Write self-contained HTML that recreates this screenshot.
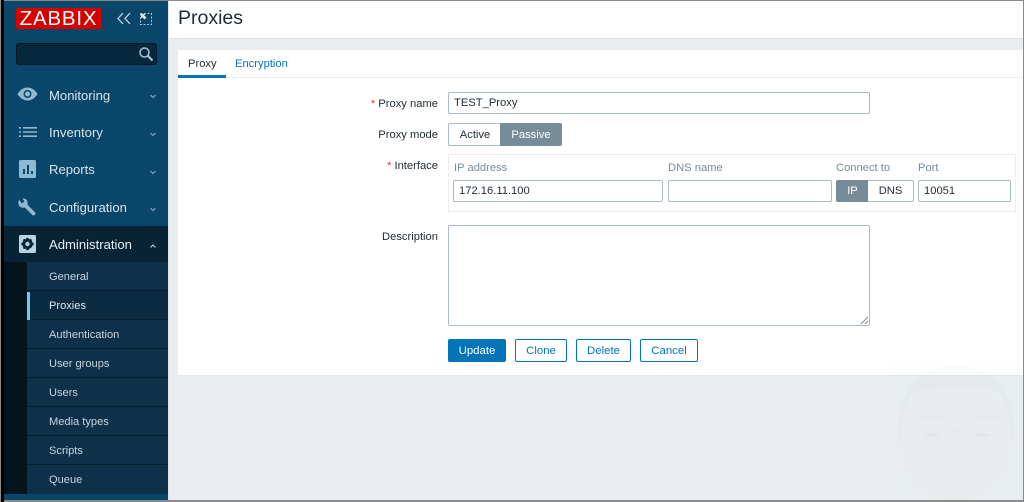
<!DOCTYPE html>
<html><head><meta charset="utf-8"><style>
*{box-sizing:border-box}
html,body{margin:0;padding:0}
html{background:#e9edf0}
body{width:1024px;height:502px;position:relative;overflow:hidden;background:#e9edf0;font-family:"Liberation Sans",sans-serif;font-size:11.2px;color:#1f2c33;filter:blur(.35px)}
.a{position:absolute}
.t{position:absolute;white-space:nowrap;line-height:14px}
.nav{position:absolute;left:49px;font-size:13.1px;color:#d7e4ec;white-space:nowrap;line-height:16px}
.sub{position:absolute;left:27px;width:141px;height:29px;background:#0e3049;border-bottom:1px solid #07202f}
.sub span{position:absolute;left:22px;top:8px;color:#c6d5de;font-size:11.1px;line-height:14px;white-space:nowrap}
.inp{position:absolute;border:1px solid #acbbc2;border-radius:2px;background:#fff;height:22px;line-height:21px;padding-left:5px;font-size:11.2px;color:#1f2c33;white-space:nowrap}
.lbl{position:absolute;right:586px;color:#1f2c33;line-height:14px;white-space:nowrap}
.lbl b{color:#e33734;font-weight:400;font-size:11px}
.h{position:absolute;color:#768d99;line-height:14px;white-space:nowrap}
.btn{position:absolute;top:339px;height:23px;border:1px solid #0275b8;border-radius:2px;background:#fff;color:#0275b8;text-align:center;line-height:22px;font-size:11.4px}
</style></head><body>
<!-- sidebar -->
<div class="a" style="left:4px;top:0;width:164px;height:502px;background:#0a466a"></div>
<div class="a" style="left:168px;top:0;width:1px;height:502px;background:#dfe4e7"></div>
<div class="a" style="left:16px;top:8px;width:85px;height:21px;background:#d40000"></div>
<div class="t" style="left:16px;top:8px;width:85px;height:21px;line-height:22px;text-align:center;color:#fff;font-size:20.5px;letter-spacing:.8px">ZABBIX</div>
<svg class="a" style="left:116px;top:12px" width="16" height="13" viewBox="0 0 16 13" fill="none" stroke="#c3d6e2" stroke-width="1.3"><path d="M7 1 2 6.500 7 12M14 1 9 6.500l5 5.500"/></svg>
<svg class="a" style="left:140px;top:13px" width="12" height="12" viewBox="0 0 12 12" fill="none"><rect x=".5" y=".5" width="11" height="11" stroke="#a9c3d2" stroke-dasharray="2 1.500"/><path d="M1 1h4.500L4.200 2.300 6.500 4.600 4.600 6.500 2.300 4.200 1 5.500z" fill="#dbe7ee"/></svg>
<div class="a" style="left:16px;top:43px;width:141px;height:22px;background:#07283c;border:1px solid #041722;border-radius:3px"></div>
<svg class="a" style="left:138px;top:46px" width="16" height="16" viewBox="0 0 16 16" fill="none" stroke="#a9c3d2"><circle cx="6.500" cy="6.500" r="4.500" stroke-width="1.500"/><path d="m10 10 4.500 4.500" stroke-width="2"/></svg>

<svg class="a" style="left:17px;top:87px" width="21" height="14" viewBox="0 0 21 14"><path d="M.5 7C3 2.800 6.500.5 10.500.5s7.500 2.300 10 6.500c-2.500 4.200-6 6.500-10 6.500S3 11.200.5 7z" fill="#8fb9d0"/><circle cx="10.500" cy="7" r="4" fill="#0a466a"/><circle cx="10.500" cy="7" r="2.500" fill="#8fb9d0"/></svg>
<div class="nav" style="top:88px">Monitoring</div>
<svg class="a" style="left:149px;top:94px" width="8" height="5" fill="none" stroke="#8fadbf"><path d="m1.500 1 2.500 2.500L6.500 1"/></svg>

<svg class="a" style="left:19px;top:127px" width="18" height="10" viewBox="0 0 18 10" fill="#8fb9d0"><path d="M0 0h2v1.600H0zM4 0h14v1.600H4zM0 4.200h2v1.600H0zM4 4.200h14v1.600H4zM0 8.400h2V10H0zM4 8.400h14V10H4z"/></svg>
<div class="nav" style="top:125px">Inventory</div>
<svg class="a" style="left:149px;top:132px" width="8" height="5" fill="none" stroke="#8fadbf"><path d="m1.500 1 2.500 2.500L6.500 1"/></svg>

<svg class="a" style="left:19px;top:160px" width="17" height="18" viewBox="0 0 17 18"><rect width="17" height="18" rx="1.500" fill="#8fb9d0"/><path d="M4 9h2v5H4zM8 5h2v9H8zM12 11h2v3h-2z" fill="#0a466a"/></svg>
<div class="nav" style="top:162px">Reports</div>
<svg class="a" style="left:149px;top:170px" width="8" height="5" fill="none" stroke="#8fadbf"><path d="m1.500 1 2.500 2.500L6.500 1"/></svg>

<svg class="a" style="left:18px;top:198px" width="18" height="18" viewBox="0 0 18 18"><path d="M6 6 15.500 15.500" stroke="#8fb9d0" stroke-width="3.800" stroke-linecap="round" fill="none"/><circle cx="5" cy="5" r="4.700" fill="#8fb9d0"/><path d="M5 4.600 2.500 0" stroke="#0a466a" stroke-width="3.400" fill="none"/></svg>
<div class="nav" style="top:200px">Configuration</div>
<svg class="a" style="left:149px;top:207px" width="8" height="5" fill="none" stroke="#8fadbf"><path d="m1.500 1 2.500 2.500L6.500 1"/></svg>

<div class="a" style="left:4px;top:226px;width:164px;height:36px;background:#072334"></div>
<svg class="a" style="left:19px;top:235px" width="17" height="18" viewBox="0 0 17 18"><rect width="17" height="18" rx="1.500" fill="#b3d4e6"/><circle cx="8.500" cy="9" r="3.700" fill="none" stroke="#072334" stroke-width="3"/><path d="M7.300 2.900h2.400v2H7.300zM7.300 13.100h2.400v2H7.300zM2.400 7.800h2v2.400h-2zM12.600 7.800h2v2.400h-2zM3.800 5.200l1.500-1.500 1.400 1.400-1.500 1.500zM10.300 11.700l1.500-1.500 1.400 1.400-1.500 1.500zM3.800 12.800l1.400-1.400 1.500 1.400-1.400 1.500zM10.300 5.100l1.400-1.400 1.500 1.500-1.400 1.400z" fill="#072334"/></svg>
<div class="nav" style="top:237px;color:#e8f1f6">Administration</div>
<svg class="a" style="left:149px;top:244px" width="8" height="5" fill="none" stroke="#c7d7e0"><path d="m1.500 3.500L4 1l2.500 2.500"/></svg>

<div class="a" style="left:4px;top:262px;width:23px;height:232px;background:#04141d"></div>
<div class="sub" style="top:262px"><span>General</span></div>
<div class="sub" style="top:291px;background:#0a2b40"><span style="color:#dfe9ef">Proxies</span></div>
<div class="a" style="left:27px;top:292px;width:3px;height:28px;background:#76c6f5"></div>
<div class="sub" style="top:320px"><span>Authentication</span></div>
<div class="sub" style="top:349px"><span>User groups</span></div>
<div class="sub" style="top:378px"><span>Users</span></div>
<div class="sub" style="top:407px"><span>Media types</span></div>
<div class="sub" style="top:436px"><span>Scripts</span></div>
<div class="sub" style="top:465px;border-bottom:0"><span>Queue</span></div>

<!-- header -->
<div class="a" style="left:169px;top:0;width:855px;height:39px;background:#fff;border-bottom:1px solid #dfe4e7"></div>
<div class="t" style="left:178px;top:8px;font-size:19.5px;line-height:21px;color:#1f2c33">Proxies</div>

<!-- card -->
<div class="a" style="left:178px;top:50px;width:845px;height:326px;background:#fff;border-bottom:1px solid #e3e7ea"></div>
<div class="a" style="left:178px;top:77px;width:845px;height:1px;background:#ebeef0"></div>
<div class="a" style="left:178px;top:75px;width:48px;height:3px;background:#0275b8"></div>
<div class="t" style="left:188px;top:57px;color:#1f2c33">Proxy</div>
<div class="t" style="left:235px;top:57px;color:#0275b8">Encryption</div>

<div class="lbl" style="top:97px"><b>*</b> Proxy name</div>
<div class="inp" style="left:448px;top:92px;width:422px">TEST_Proxy</div>

<div class="lbl" style="top:128px">Proxy mode</div>
<div class="a" style="left:448px;top:123px;width:53px;height:23px;border:1px solid #acbbc2;border-right:0;border-radius:2px 0 0 2px;background:#fff;text-align:center;line-height:22px;color:#1f2c33">Active</div>
<div class="a" style="left:500px;top:123px;width:62px;height:23px;background:#768d99;border-radius:0 2px 2px 0;text-align:center;line-height:24px;color:#fff">Passive</div>

<div class="lbl" style="top:159px"><b>*</b> Interface</div>
<div class="a" style="left:448px;top:154px;width:568px;height:58px;border:1px solid #ebeef0"></div>
<div class="h" style="left:454px;top:161px">IP address</div>
<div class="h" style="left:668px;top:161px">DNS name</div>
<div class="h" style="left:836px;top:161px">Connect to</div>
<div class="h" style="left:918px;top:161px">Port</div>
<div class="inp" style="left:453px;top:180px;width:210px">172.16.11.100</div>
<div class="inp" style="left:668px;top:180px;width:164px"></div>
<div class="a" style="left:836px;top:180px;width:33px;height:22px;background:#768d99;border-radius:2px 0 0 2px;text-align:center;line-height:23px;color:#fff">IP</div>
<div class="a" style="left:868px;top:180px;width:46px;height:22px;border:1px solid #acbbc2;border-left:0;border-radius:0 2px 2px 0;background:#fff;text-align:center;line-height:21px">DNS</div>
<div class="inp" style="left:918px;top:180px;width:93px">10051</div>

<div class="lbl" style="top:230px">Description</div>
<div class="inp" style="left:448px;top:225px;width:422px;height:101px"></div>
<svg class="a" style="left:860px;top:316px" width="9" height="9" stroke="#7a8a93" stroke-width="1"><path d="M1 8 8 1M5 8l3-3"/></svg>

<div class="btn" style="left:448px;width:58px;background:#0275b8;color:#fff">Update</div>
<div class="btn" style="left:515px;width:52px">Clone</div>
<div class="btn" style="left:576px;width:55px">Delete</div>
<div class="btn" style="left:640px;width:58px">Cancel</div>

<!-- watermark -->
<svg class="a" style="left:0;top:0" width="1024" height="502" viewBox="0 0 1024 502">
<rect x="887" y="365" width="136" height="137" fill="rgba(230,238,245,.08)"/>
<ellipse cx="955" cy="440" rx="56" ry="62" fill="rgba(238,234,230,.18)"/>
<path d="M899 443C892 400 915 366 956 366c42 0 64 34 56 77-2-23-7-43-14-51-23-8-63-8-84 0-8 8-12 28-15 51z" fill="rgba(0,0,0,.01)"/>
<path d="M918 419c8-4 17-4 25 0M975 419c8-4 17-4 25 0" stroke="rgba(0,0,0,.012)" stroke-width="3" fill="none"/>
<path d="M925 435h13M975 435h14" stroke="rgba(0,0,0,.02)" stroke-width="3" fill="none"/>
<path d="M953 431h10" stroke="rgba(0,0,0,.012)" stroke-width="2" fill="none"/>
</svg>

<!-- frame -->
<div class="a" style="left:0;top:0;width:1024px;height:1px;background:#8a8a8a"></div>
<div class="a" style="left:0;top:500px;width:1024px;height:2px;background:#8a8a8a"></div>
<div class="a" style="left:0;top:0;width:1px;height:502px;background:#8a8a8a"></div>
<div class="a" style="left:1px;top:0;width:3px;height:502px;background:#000"></div>
<div class="a" style="left:1023px;top:0;width:1px;height:502px;background:#8a8a8a"></div>
</body></html>
